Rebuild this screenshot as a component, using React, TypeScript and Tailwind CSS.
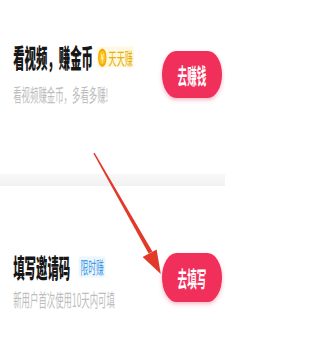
import React from 'react';

const CoinIcon: React.FC = () => (
  <svg width="15" height="15" viewBox="0 0 16 16" className="shrink-0">
    <circle cx="8" cy="8" r="7.6" fill="#f2a900" />
    <circle cx="8" cy="8" r="5.6" fill="#ffc21f" />
    <path d="M5.8 5.2 L8 8 L10.2 5.2 M8 8 L8 11.4 M6.2 8.6 H9.8" stroke="#fff1b8" strokeWidth="1.3" fill="none" strokeLinecap="round" />
  </svg>
);

const Arrow: React.FC = () => (
  <svg width="225" height="363" viewBox="0 0 225 363" className="absolute left-0 top-0 pointer-events-none">
    <polygon points="93.4,153.4 94.6,152.7 152.4,251.5 148.6,253.6" fill="#e2392b" />
    <polygon points="142.6,257.1 156.6,249.5 160.8,274" fill="#e2392b" />
  </svg>
);

const App: React.FC = () => {
  const tasks = [
    { title: '看视频，赚金币', desc: '看视频赚金币，多看多赚!', action: '去赚钱' },
    { title: '填写邀请码', desc: '新用户首次使用10天内可填', action: '去填写' },
  ];

  return (
    <div className="relative w-[225px] h-[363px] overflow-hidden bg-white font-['Noto_Sans_CJK_SC','Noto_Sans',sans-serif]">
      {/* phone screen is 375 wide, squeezed into 225 */}
      <div className="w-[375px] h-[363px] origin-top-left scale-x-[0.6] flex flex-col">
        {/* task 1 */}
        <div className="h-[174px] flex items-start justify-between pl-[22px] pr-[5px]">
          <div className="mt-[47px] flex flex-col items-start">
            <div className="flex items-center">
              <span className="inline-block scale-y-[1.35] text-[19px] leading-[20px] font-black text-[#161616]">{tasks[0].title}</span>
              <span className="ml-[6px] flex items-center gap-[3px] rounded-[3px] bg-[#fff9e4] px-[2px] scale-y-[1.3]">
                <CoinIcon />
                <span className="text-[13.5px] leading-[16px] text-[#e8b000]">天天赚</span>
              </span>
            </div>
            <span className="inline-block mt-[20px] scale-y-[1.3] text-[14px] leading-[15px] text-[#bdbdbd]">{tasks[0].desc}</span>
          </div>
          <button className="mt-[51px] w-[100px] h-[47px] rounded-full bg-[#f0305b] text-white shadow-[0_2px_6px_rgba(240,48,91,0.35)]">
            <span className="inline-block scale-y-[1.35] text-[16px] font-bold">{tasks[0].action}</span>
          </button>
        </div>

        {/* divider band */}
        <div className="h-[12px] bg-gradient-to-b from-[#f8f8f8] to-[#f2f2f2]" />

        {/* task 2 */}
        <div className="flex items-start justify-between pl-[22px] pr-[5px]">
          <div className="mt-[71px] flex flex-col items-start">
            <div className="flex items-center">
              <span className="inline-block scale-y-[1.35] text-[19px] leading-[20px] font-black text-[#161616]">{tasks[1].title}</span>
              <span className="ml-[14px] inline-block scale-y-[1.3] rounded-[3px] bg-[#eef6fd] px-[3px] text-[13px] leading-[16px] text-[#3f9be6]">限时赚</span>
            </div>
            <span className="inline-block mt-[15px] scale-y-[1.3] text-[14px] leading-[15px] text-[#bdbdbd]">{tasks[1].desc}</span>
          </div>
          <button className="mt-[67px] w-[100px] h-[49px] rounded-full bg-[#f0305b] text-white shadow-[0_2px_6px_rgba(240,48,91,0.35)]">
            <span className="inline-block scale-y-[1.35] text-[16px] font-bold">{tasks[1].action}</span>
          </button>
        </div>
      </div>
      <Arrow />
    </div>
  );
};

export default App;
